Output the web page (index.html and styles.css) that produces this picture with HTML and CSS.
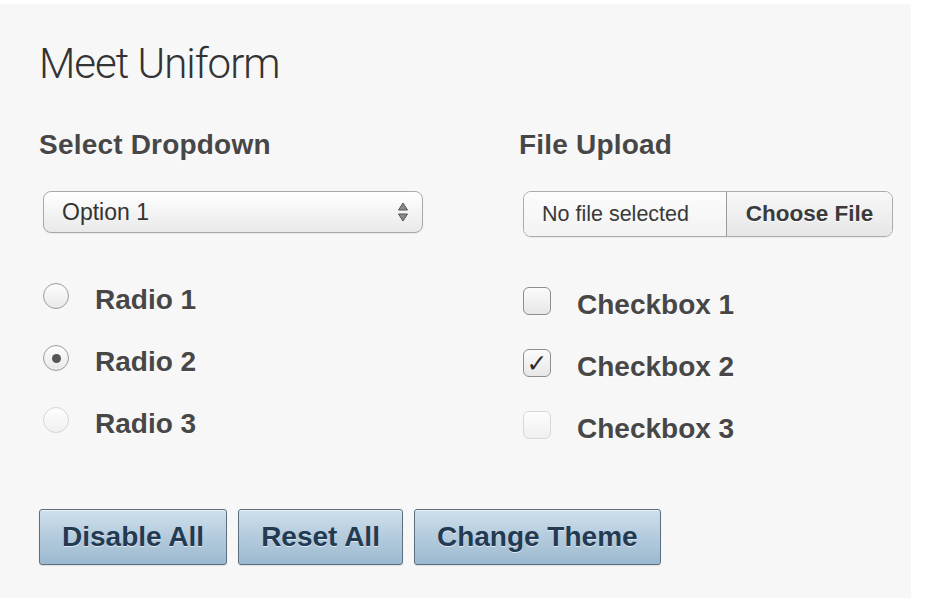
FILE: index.html
```html
<!DOCTYPE html>
<html lang="en">
<head>
<meta charset="utf-8">
<title>Meet Uniform</title>
<link rel="stylesheet" href="styles.css">
</head>
<body>
<div class="panel">
  <h1 class="title">Meet Uniform</h1>
  <div class="columns">
    <div class="col">
      <h2 class="heading">Select Dropdown</h2>
      <div class="select">
        <span class="select-text">Option 1</span>
        <svg class="select-arrows" width="12" height="22" viewBox="0 0 12 22">
          <path d="M6 2 L10.5 9 L1.5 9 Z" fill="#8a8a8a" stroke="#555" stroke-width="1" stroke-linejoin="round"/>
          <path d="M6 20 L10.5 13 L1.5 13 Z" fill="#8a8a8a" stroke="#555" stroke-width="1" stroke-linejoin="round"/>
        </svg>
      </div>
      <div class="options">
        <div class="row"><span class="radio"></span><span class="label">Radio 1</span></div>
        <div class="row"><span class="radio checked"></span><span class="label">Radio 2</span></div>
        <div class="row"><span class="radio disabled"></span><span class="label">Radio 3</span></div>
      </div>
    </div>
    <div class="col">
      <h2 class="heading">File Upload</h2>
      <div class="file">
        <span class="file-name">No file selected</span>
        <span class="file-btn">Choose File</span>
      </div>
      <div class="options options-right">
        <div class="row"><span class="check"></span><span class="label">Checkbox 1</span></div>
        <div class="row"><span class="check checked">✓</span><span class="label">Checkbox 2</span></div>
        <div class="row"><span class="check disabled"></span><span class="label">Checkbox 3</span></div>
      </div>
    </div>
  </div>
  <div class="buttons">
    <button class="btn">Disable All</button>
    <button class="btn">Reset All</button>
    <button class="btn">Change Theme</button>
  </div>
</div>
</body>
</html>
```
FILE: styles.css
```css
html, body {
  margin: 0;
  padding: 0;
  background: #ffffff;
}
body {
  padding-top: 4px;
  font-family: "Liberation Sans", Arial, sans-serif;
}
.panel {
  width: 911px;
  height: 594px;
  box-sizing: border-box;
  background: #f7f7f7;
  padding: 36px 0 0 39px;
}
.title {
  margin: 0;
  font-family: "Roboto", "Liberation Sans", sans-serif;
  font-weight: 300;
  font-size: 42px;
  line-height: 48px;
  letter-spacing: -1px;
  color: #333;
}
.columns {
  display: grid;
  grid-template-columns: 480px 1fr;
  margin-top: 41px;
}
.heading {
  margin: 0;
  font-size: 28px;
  line-height: 32px;
  font-weight: bold;
  letter-spacing: 0.2px;
  color: #474747;
  text-shadow: 0 1px 0 rgba(255,255,255,0.9);
}
.select {
  margin: 30px 0 0 4px;
  width: 380px;
  height: 42px;
  box-sizing: border-box;
  border: 1px solid #a9a9a9;
  border-radius: 8px;
  background: linear-gradient(#ffffff, #f4f4f4 50%, #e9e9e9);
  box-shadow: 0 1px 1px rgba(0,0,0,0.06);
  display: flex;
  align-items: center;
  justify-content: space-between;
  padding: 0 13px 0 18px;
}
.select-text {
  font-size: 23px;
  color: #333;
}
.select-arrows {
  display: block;
}
.file {
  margin: 30px 0 0 4px;
  width: 370px;
  height: 46px;
  box-sizing: border-box;
  border: 1px solid #acacac;
  border-radius: 8px;
  overflow: hidden;
  display: flex;
  box-shadow: 0 1px 1px rgba(0,0,0,0.06);
}
.file-name {
  width: 203px;
  box-sizing: border-box;
  padding-left: 18px;
  display: flex;
  align-items: center;
  font-size: 21.5px;
  color: #3a3a3a;
  background: linear-gradient(#fcfcfc, #f3f3f3);
  border-right: 1px solid #9a9a9a;
}
.file-btn {
  flex: 1;
  display: flex;
  align-items: center;
  justify-content: center;
  font-size: 22.5px;
  font-weight: bold;
  color: #3a3a3a;
  background: linear-gradient(#f8f8f8, #e6e6e6);
  text-shadow: 0 1px 0 #fff;
}
.options {
  margin-top: 32px;
  display: flex;
  flex-direction: column;
}
.options-right {
  margin-top: 33px;
}
.row {
  height: 62px;
  display: flex;
  align-items: center;
}
.label {
  font-size: 28px;
  font-weight: bold;
  color: #474747;
  text-shadow: 0 1px 0 rgba(255,255,255,0.9);
  padding-top: 8px;
}
.radio {
  width: 26px;
  height: 26px;
  box-sizing: border-box;
  margin-left: 4px;
  margin-right: 26px;
  border-radius: 50%;
  border: 1px solid #9c9c9c;
  background: linear-gradient(#fdfdfd, #e9e9e9);
  display: flex;
  align-items: center;
  justify-content: center;
}
.radio.checked::after {
  content: "";
  width: 9px;
  height: 9px;
  border-radius: 50%;
  background: #555;
}
.radio.disabled {
  border-color: #d6d6d6;
  background: linear-gradient(#fdfdfd, #f1f1f1);
}
.check {
  width: 28px;
  height: 28px;
  box-sizing: border-box;
  margin-left: 4px;
  margin-right: 26px;
  border-radius: 6px;
  border: 1px solid #8e8e8e;
  background: linear-gradient(#fbfbfb, #e7e7e7);
  display: flex;
  align-items: center;
  justify-content: center;
  font-family: "DejaVu Sans", sans-serif;
  font-size: 25px;
  color: #2a2a2a;
  line-height: 1;
}
.check.disabled {
  border-color: #d8d8d8;
  background: linear-gradient(#fdfdfd, #f0f0f0);
}
.buttons {
  display: flex;
  gap: 11px;
  margin-top: 53px;
}
.btn {
  height: 56px;
  box-sizing: border-box;
  padding: 0 22px;
  border: 1px solid #5b6f80;
  border-radius: 3px;
  background: linear-gradient(#cfe0ec, #b4cbdd 50%, #9cb9d0);
  box-shadow: inset 0 1px 0 rgba(255,255,255,0.6), 0 1px 1px rgba(0,0,0,0.1);
  font-family: "Liberation Sans", Arial, sans-serif;
  font-size: 28px;
  font-weight: bold;
  color: #223a52;
  text-shadow: 0 1px 0 rgba(255,255,255,0.6);
  cursor: pointer;
}
```
